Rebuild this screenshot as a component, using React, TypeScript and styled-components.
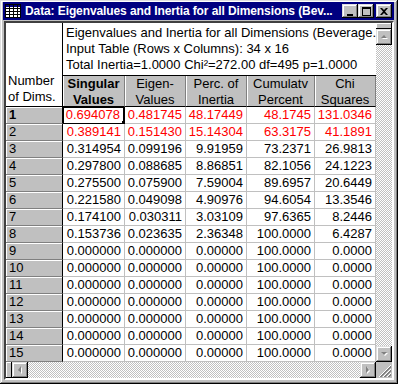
import styled, { createGlobalStyle } from 'styled-components';

const GlobalStyle = createGlobalStyle`
  html, body {
    margin: 0;
    padding: 0;
    background: #c0c0c0;
  }
  body {
    font-family: "Liberation Sans", Arial, sans-serif;
  }
`;

const raised = `
  box-shadow: inset -1px -1px #000, inset 1px 1px #dfdfdf,
    inset -2px -2px #808080, inset 2px 2px #fff;
`;

const checker = `
  background-color: #c0c0c0;
  background-image: conic-gradient(#fff 25%, #c0c0c0 0 50%, #fff 0 75%, #c0c0c0 0);
  background-size: 2px 2px;
`;

const Window = styled.div`
  width: 398px;
  height: 384px;
  box-sizing: border-box;
  padding: 2px 4px 4px 3px;
  background: #c0c0c0;
  ${raised}
  display: flex;
  flex-direction: column;
`;

const TitleBar = styled.div`
  height: 18px;
  flex: none;
  background: #000080;
  display: flex;
  align-items: center;
  padding: 0 2px 0 2px;
  color: #fff;
`;

const TitleText = styled.span`
  flex: 1;
  margin-left: 4px;
  font-weight: 700;
  font-size: 12px;
  letter-spacing: -0.1px;
  white-space: nowrap;
  overflow: hidden;
`;

const TitleButton = styled.div<{ $gap?: boolean }>`
  flex: none;
  width: 16px;
  height: 14px;
  margin-left: ${(p) => (p.$gap ? '2px' : '0')};
  background: #c0c0c0;
  ${raised}
  display: flex;
  align-items: center;
  justify-content: center;
`;

const Client = styled.div`
  flex: 1;
  margin: 1px 0 0 1px;
  border-style: solid;
  border-width: 2px;
  border-color: #404040 #fff #fff #404040;
  display: grid;
  grid-template-columns: 370px 16px;
  grid-template-rows: 339px 16px;
  overflow: hidden;
  background: #fff;
`;

const Table = styled.div`
  display: grid;
  grid-template-columns: 57px 62px 61px 61px 68px 61px;
  grid-template-rows: 53px 31px repeat(15, 17px);
  font-size: 13px;
  color: #000;
  overflow: hidden;
`;

const Corner = styled.div`
  grid-row: 1 / span 2;
  box-sizing: border-box;
  background: #fff;
  border-right: 1px solid #000;
  border-bottom: 1px solid #000;
  display: flex;
  flex-direction: column;
  justify-content: flex-end;
  padding: 0 0 1px 2px;
  line-height: 16px;
`;

const Info = styled.div`
  grid-column: 2 / span 5;
  box-sizing: border-box;
  border-bottom: 1px solid #000;
  padding: 2px 0 0 3px;
  line-height: 16px;
  white-space: nowrap;
  overflow: hidden;
`;

const HeadCell = styled.div<{ $bold?: boolean }>`
  box-sizing: border-box;
  background: #c0c0c0;
  border-bottom: 1px solid #000;
  border-right: 1px solid #808080;
  box-shadow: inset 1px 0 #fff;
  text-align: center;
  line-height: 16px;
  padding-top: 0;
  font-weight: ${(p) => (p.$bold ? 700 : 400)};
  white-space: nowrap;
`;

const RowHead = styled.div<{ $bold?: boolean }>`
  box-sizing: border-box;
  background: #c0c0c0;
  border-right: 1px solid #000;
  border-bottom: 1px solid #808080;
  box-shadow: inset 1px 1px #fff;
  padding-left: 3px;
  line-height: 16px;
  font-weight: ${(p) => (p.$bold ? 700 : 400)};
`;

const Cell = styled.div<{ $red?: boolean; $selected?: boolean }>`
  position: relative;
  box-sizing: border-box;
  background: #fff;
  border-right: 1px solid #c0c0c0;
  border-bottom: 1px solid #c0c0c0;
  text-align: right;
  padding-right: 3px;
  line-height: 16px;
  color: ${(p) => (p.$red ? '#ff0000' : '#000')};
  white-space: nowrap;
  ${(p) =>
    p.$selected &&
    `
    border-color: #000;
    border-right-width: 2px;
    box-shadow: inset 1px 1px #000;
  `}
`;

const Handle = styled.span`
  position: absolute;
  right: -4px;
  bottom: -3px;
  width: 5px;
  height: 5px;
  background: #000;
`;

const VScroll = styled.div`
  display: flex;
  flex-direction: column;
  background: #c0c0c0;
`;

const HScroll = styled.div`
  display: flex;
  background: #c0c0c0;
`;

const Splitter = styled.div<{ $vertical?: boolean }>`
  flex: none;
  width: ${(p) => (p.$vertical ? '16px' : '6px')};
  height: ${(p) => (p.$vertical ? '6px' : '16px')};
  background: #c0c0c0;
  box-shadow: inset -1px -1px #000, inset 1px 1px #fff;
`;

const Track = styled.div`
  flex: 1;
  ${checker}
`;

const ArrowBtn = styled.div`
  flex: none;
  width: 16px;
  height: 16px;
  background: #c0c0c0;
  ${raised}
  display: flex;
  align-items: center;
  justify-content: center;
`;

const Grip = styled.div`
  background: #c0c0c0;
  display: flex;
  align-items: flex-end;
  justify-content: flex-end;
`;

type Dir = 'up' | 'down' | 'left' | 'right';

const arrowPts: Record<Dir, string> = {
  up: '4,1 1,4 7,4',
  down: '1,1 7,1 4,4',
  left: '4,0 4,7 1,4',
  right: '1,0 1,7 4,4',
};

function Arrow({ dir }: { dir: Dir }) {
  const vertical = dir === 'up' || dir === 'down';
  return (
    <ArrowBtn>
      <svg width={vertical ? 9 : 6} height={vertical ? 6 : 9} viewBox={vertical ? '0 0 9 6' : '0 0 6 9'}>
        <polygon points={arrowPts[dir]} fill="#fff" transform="translate(1,1)" />
        <polygon points={arrowPts[dir]} fill="#808080" />
      </svg>
    </ArrowBtn>
  );
}

function TableIcon() {
  return (
    <svg width="16" height="14" viewBox="0 0 16 14">
      <rect x="0.5" y="0.5" width="15" height="13" fill="#fff" stroke="#000" />
      <rect x="1" y="1" width="14" height="2" fill="#000080" />
      {[4, 7, 10].map((y) => (
        <line key={y} x1="1" y1={y + 0.5} x2="15" y2={y + 0.5} stroke="#000" />
      ))}
      {[4, 8, 12].map((x) => (
        <line key={x} x1={x + 0.5} y1="1" x2={x + 0.5} y2="13" stroke="#000" />
      ))}
    </svg>
  );
}

const rows: string[][] = [
  ['0.694078', '0.481745', '48.17449', '48.1745', '131.0346'],
  ['0.389141', '0.151430', '15.14304', '63.3175', '41.1891'],
  ['0.314954', '0.099196', '9.91959', '73.2371', '26.9813'],
  ['0.297800', '0.088685', '8.86851', '82.1056', '24.1223'],
  ['0.275500', '0.075900', '7.59004', '89.6957', '20.6449'],
  ['0.221580', '0.049098', '4.90976', '94.6054', '13.3546'],
  ['0.174100', '0.030311', '3.03109', '97.6365', '8.2446'],
  ['0.153736', '0.023635', '2.36348', '100.0000', '6.4287'],
  ...Array.from({ length: 7 }, () => ['0.000000', '0.000000', '0.00000', '100.0000', '0.0000']),
];

const headers: [string, string][] = [
  ['Singular', 'Values'],
  ['Eigen-', 'Values'],
  ['Perc. of', 'Inertia'],
  ['Cumulatv', 'Percent'],
  ['Chi', 'Squares'],
];

function RowGroup({ index, values }: { index: number; values: string[] }) {
  const red = index < 2;
  return (
    <>
      <RowHead $bold={index === 0}>{index + 1}</RowHead>
      {values.map((v, ci) => (
        <Cell key={ci} $red={red} $selected={index === 0 && ci === 0}>
          {v}
          {index === 0 && ci === 0 && <Handle />}
        </Cell>
      ))}
    </>
  );
}

export default function App() {
  return (
    <>
      <GlobalStyle />
      <Window>
        <TitleBar>
          <TableIcon />
          <TitleText>Data: Eigenvalues and Inertia for all Dimensions (Bev...</TitleText>
          <TitleButton>
            <svg width="8" height="9" viewBox="0 0 8 9">
              <rect x="1" y="7" width="6" height="2" fill="#000" />
            </svg>
          </TitleButton>
          <TitleButton>
            <svg width="9" height="9" viewBox="0 0 9 9">
              <rect x="0.5" y="0.5" width="8" height="8" fill="none" stroke="#000" />
              <rect x="0" y="0" width="9" height="2" fill="#000" />
            </svg>
          </TitleButton>
          <TitleButton $gap>
            <svg width="8" height="7" viewBox="0 0 8 7">
              <path d="M0 0h2l2 2 2-2h2L5 3.5 8 7H6L4 5 2 7H0l3-3.5z" fill="#000" />
            </svg>
          </TitleButton>
        </TitleBar>
        <Client>
          <Table>
            <Corner>
              <span>Number</span>
              <span>of Dims.</span>
            </Corner>
            <Info>
              Eigenvalues and Inertia for all Dimensions (Beverage.sta)
              <br />
              Input Table (Rows x Columns): 34 x 16
              <br />
              Total Inertia=1.0000 Chi²=272.00 df=495 p=1.0000
            </Info>
            {headers.map(([a, b], i) => (
              <HeadCell key={a} $bold={i === 0}>
                {a}
                <br />
                {b}
              </HeadCell>
            ))}
            {rows.map((r, ri) => (
              <RowGroup key={ri} index={ri} values={r} />
            ))}
          </Table>
          <VScroll>
            <Splitter $vertical />
            <Arrow dir="up" />
            <Track />
            <Arrow dir="down" />
          </VScroll>
          <HScroll>
            <Splitter />
            <Arrow dir="left" />
            <Track />
            <Arrow dir="right" />
          </HScroll>
          <Grip>
            <svg width="14" height="14" viewBox="0 0 14 14">
              {[0, 4, 8].map((o) => (
                <g key={o}>
                  <line x1={13} y1={o + 1} x2={o + 1} y2={13} stroke="#fff" />
                  <line x1={13} y1={o + 2} x2={o + 2} y2={13} stroke="#808080" />
                  <line x1={13} y1={o + 3} x2={o + 3} y2={13} stroke="#808080" />
                </g>
              ))}
            </svg>
          </Grip>
        </Client>
      </Window>
    </>
  );
}
